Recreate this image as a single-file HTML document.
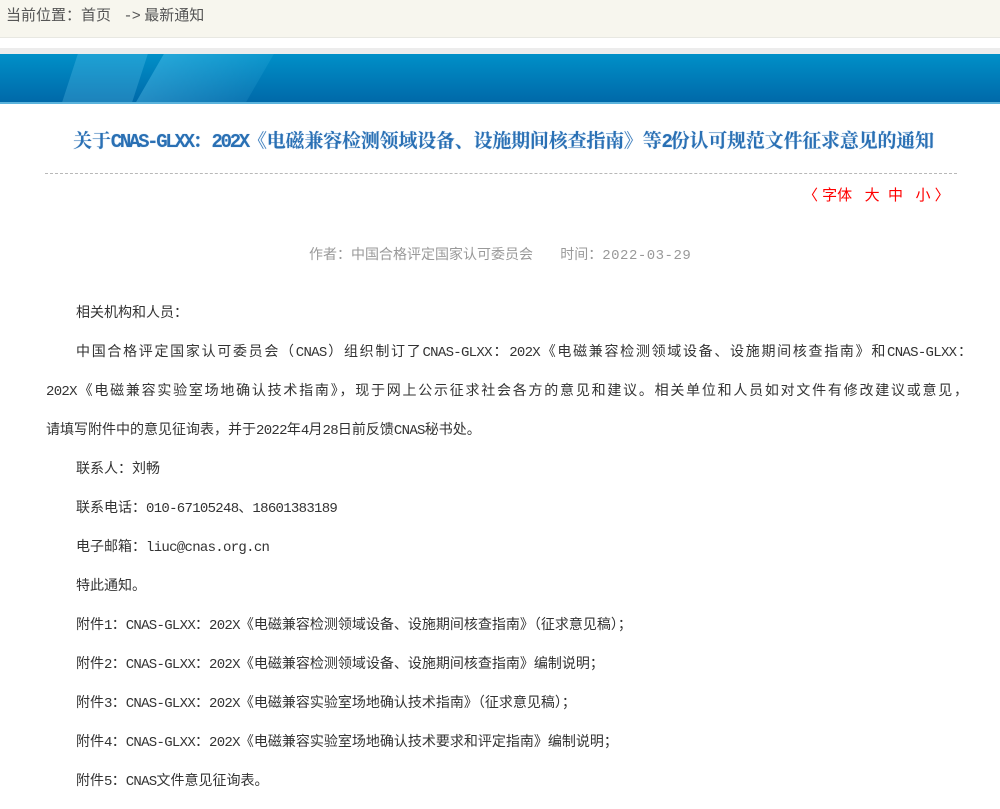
<!DOCTYPE html>
<html><head><meta charset="utf-8"><style>
body{margin:0;width:1000px;height:809px;overflow:hidden;background:#fff;font-family:"Liberation Sans","Noto Sans CJK SC",sans-serif;}
.m{font-family:"Liberation Mono",monospace;letter-spacing:-0.7px;line-height:1;}
.bc{height:37px;background:#f7f6ee;border-bottom:1px solid #e8e8e2;font-size:15px;color:#555;line-height:32px;padding-left:6px;}
.gap{height:10px;}
.gray{height:6px;background:#ececec;}
.ban{height:48px;background:linear-gradient(#0090c8,#0069a9);position:relative;overflow:hidden;border-bottom:2px solid #5bb3dc;}
.ban:before{content:"";position:absolute;left:70px;top:0;width:70px;height:48px;background:rgba(130,225,255,.22);transform:skewX(-18deg);}
.ban:after{content:"";position:absolute;left:150px;top:0;width:110px;height:48px;background:linear-gradient(90deg,rgba(120,220,255,.3),rgba(120,220,255,.1));transform:skewX(-30deg);}
h1{margin:0;position:absolute;top:126px;left:0;width:1007px;text-align:center;font-size:19px;font-weight:bold;color:#2a70b4;font-family:"Liberation Serif","Noto Serif CJK SC",serif;text-shadow:0 0 1px #a8c8e8;white-space:nowrap;letter-spacing:-0.2px;}
h1 .m{letter-spacing:-2.3px;}
.dot{position:absolute;top:173px;left:45px;width:912px;border-top:1px dashed #b8b8b8;}
.fs{position:absolute;top:184px;left:803px;font-size:15px;color:#f00;white-space:nowrap;}
.meta{position:absolute;top:244px;left:309px;font-size:14px;color:#999;white-space:nowrap;}
.body{position:absolute;top:293px;left:46px;width:930px;font-size:14px;color:#333;line-height:39px;white-space:nowrap;}
.body p{margin:0;text-indent:30px;height:39px;overflow:visible;}
.body div.j{height:39px;text-align:justify;text-align-last:justify;}
</style></head><body>
<div class="bc">当前位置：首页 <span class="m">&nbsp;-&gt;</span> 最新通知</div>
<div class="gap"></div>
<div class="gray"></div>
<div class="ban"></div>
<h1>关于<span class="m">CNAS-GLXX</span>：<span class="m">202X</span>《电磁兼容检测领域设备、设施期间核查指南》等<span class="m">2</span>份认可规范文件征求意见的通知</h1>
<div class="dot"></div>
<div class="fs">〈 字体&nbsp;&nbsp; 大&nbsp; 中&nbsp;&nbsp; 小 〉</div>
<div class="meta">作者：中国合格评定国家认可委员会&nbsp;&nbsp;&nbsp;&nbsp;&nbsp;&nbsp; 时间：<span class="m" style="letter-spacing:0.5px">2022-03-29</span></div>
<div class="body">
<p>相关机构和人员：</p>
<div class="j" style="margin-left:30px;width:896px">中国合格评定国家认可委员会（<span class="m">CNAS</span>）组织制订了<span class="m">CNAS-GLXX</span>：<span class="m">202X</span>《电磁兼容检测领域设备、设施期间核查指南》和<span class="m">CNAS-GLXX</span>：</div>
<div class="j" style="width:922px"><span class="m">202X</span>《电磁兼容实验室场地确认技术指南》，现于网上公示征求社会各方的意见和建议。相关单位和人员如对文件有修改建议或意见，</div>
<div style="height:39px">请填写附件中的意见征询表，并于<span class="m">2022</span>年<span class="m">4</span>月<span class="m">28</span>日前反馈<span class="m">CNAS</span>秘书处。</div>
<p>联系人：刘畅</p>
<p>联系电话：<span class="m">010-67105248</span>、<span class="m">18601383189</span></p>
<p>电子邮箱：<span class="m">liuc@cnas.org.cn</span></p>
<p>特此通知。</p>
<p>附件<span class="m">1</span>：<span class="m">CNAS-GLXX</span>：<span class="m">202X</span>《电磁兼容检测领域设备、设施期间核查指南》（征求意见稿）；</p>
<p>附件<span class="m">2</span>：<span class="m">CNAS-GLXX</span>：<span class="m">202X</span>《电磁兼容检测领域设备、设施期间核查指南》编制说明；</p>
<p>附件<span class="m">3</span>：<span class="m">CNAS-GLXX</span>：<span class="m">202X</span>《电磁兼容实验室场地确认技术指南》（征求意见稿）；</p>
<p>附件<span class="m">4</span>：<span class="m">CNAS-GLXX</span>：<span class="m">202X</span>《电磁兼容实验室场地确认技术要求和评定指南》编制说明；</p>
<p>附件<span class="m">5</span>：<span class="m">CNAS</span>文件意见征询表。</p>
</div>
</body></html>
